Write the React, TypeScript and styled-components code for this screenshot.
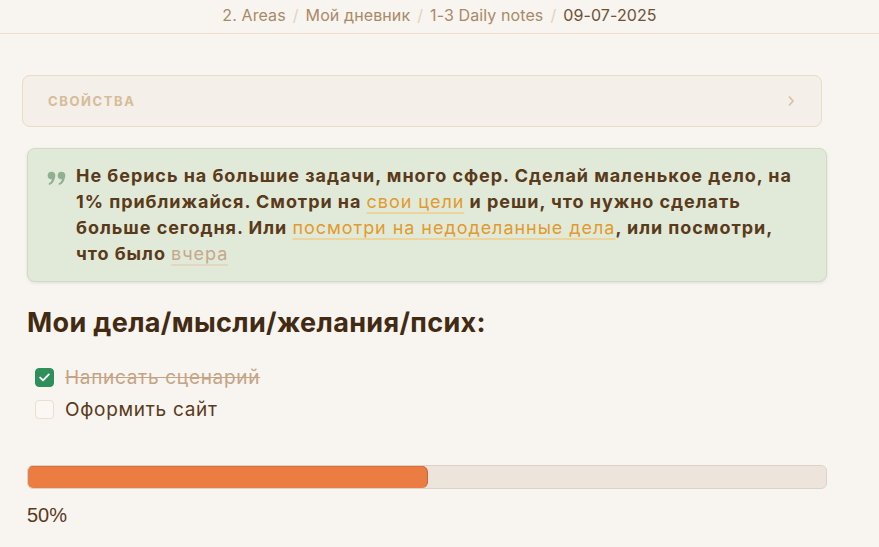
import React from "react";
import styled, { createGlobalStyle } from "styled-components";

const Global = createGlobalStyle`
  html, body { margin: 0; padding: 0; background: #f8f4ef; }
  body { font-family: Inter, "Noto Sans", sans-serif; color: #5a3a1a; }
`;

const Page = styled.div`
  width: 879px;
  min-height: 547px;
  display: flex;
  flex-direction: column;
`;

const Header = styled.div`
  height: 34px;
  border-bottom: 1px solid #efdfc9;
  display: flex;
  align-items: center;
  justify-content: center;
  gap: 7px;
  font-size: 16px;
  letter-spacing: 0.1px;
  box-sizing: border-box;
  padding-bottom: 4px;
`;

const Sep = styled.span`
  color: #e2d2bd;
`;

const Crumb = styled.span<{ $current?: boolean }>`
  color: ${(p) => (p.$current ? "#6e5236" : "#a88a68")};
`;

const Content = styled.div`
  display: flex;
  flex-direction: column;
  padding: 41px 0 0 27px;
  width: 800px;
`;

const Props = styled.div`
  margin-left: -5px;
  width: 800px;
  height: 52px;
  box-sizing: border-box;
  border: 1px solid #eadcc7;
  border-radius: 8px;
  background: #f4efe8;
  display: flex;
  align-items: center;
  justify-content: space-between;
  padding: 0 26px 0 25px;
`;

const PropsLabel = styled.span`
  font-size: 13px;
  font-weight: 700;
  letter-spacing: 1.6px;
  color: #d6bc98;
`;

const Quote = styled.div`
  margin-top: 21px;
  box-sizing: border-box;
  background: #e1ead9;
  border: 1px solid #cfdbc6;
  border-radius: 8px;
  box-shadow: 0 1px 3px rgba(120, 130, 100, 0.18);
  padding: 14px 20px 14px 19px;
  display: flex;
  gap: 9px;
`;

const QuoteIcon = styled.svg`
  flex: none;
  margin-top: 8px;
`;

const QuoteText = styled.div`
  font-size: 18px;
  font-weight: 700;
  line-height: 26px;
  color: #5a3a1a;
  letter-spacing: 0.95px;
`;

const Link = styled.a<{ $muted?: boolean }>`
  font-weight: 400;
  color: ${(p) => (p.$muted ? "#c4a98a" : "#e19a2e")};
  text-decoration: underline;
  text-decoration-color: ${(p) => (p.$muted ? "#e5d6c2" : "#ecd49c")};
  text-decoration-thickness: 2px;
  text-underline-offset: 4px;
`;

const Heading = styled.h2`
  margin: 23px 0 0 0;
  font-size: 27px;
  font-weight: 700;
  line-height: 36px;
  letter-spacing: 0.35px;
  color: #432a12;
`;

const List = styled.div`
  margin-top: 27px;
  padding-left: 8px;
  display: flex;
  flex-direction: column;
  gap: 13px;
`;

const Item = styled.div`
  display: flex;
  align-items: center;
  gap: 11px;
  height: 19px;
`;

const Box = styled.div<{ $checked?: boolean }>`
  width: 19px;
  height: 19px;
  box-sizing: border-box;
  border-radius: 4px;
  background: ${(p) => (p.$checked ? "#2f8f5b" : "#fbf8f4")};
  border: 1px solid ${(p) => (p.$checked ? "#2f8f5b" : "#eadfd0")};
  display: flex;
  align-items: center;
  justify-content: center;
`;

const ItemText = styled.span<{ $done?: boolean }>`
  font-size: 19px;
  letter-spacing: 0.7px;
  color: ${(p) => (p.$done ? "#c4a484" : "#5a3a1a")};
  text-decoration: ${(p) => (p.$done ? "line-through" : "none")};
`;

const Track = styled.div`
  margin-top: 46px;
  height: 24px;
  box-sizing: border-box;
  border: 1px solid #dcd2c7;
  border-radius: 6px;
  background: #ede5dc;
  overflow: hidden;
  display: flex;
`;

const Fill = styled.div`
  height: 100%;
  background: #eb7c42;
  border-right: 1px solid #c9683a;
  border-radius: 0 6px 6px 0;
  box-shadow: inset 0 1px 0 #d9703c;
`;

const Percent = styled.div`
  margin-top: 15px;
  font-family: "Liberation Sans", Arial, sans-serif;
  font-size: 20px;
  line-height: 23px;
  color: #5a3a1a;
`;

export default function App() {
  const pct = 50;
  return (
    <Page>
      <Global />
      <Header>
        <Crumb>2. Areas</Crumb>
        <Sep>/</Sep>
        <Crumb>Мой дневник</Crumb>
        <Sep>/</Sep>
        <Crumb>1-3 Daily notes</Crumb>
        <Sep>/</Sep>
        <Crumb $current>09-07-2025</Crumb>
      </Header>
      <Content>
        <Props>
          <PropsLabel>СВОЙСТВА</PropsLabel>
          <svg width="8" height="12" viewBox="0 0 8 12">
            <path d="M2 1.5 L6 6 L2 10.5" fill="none" stroke="#d9c4a4" strokeWidth="1.8" />
          </svg>
        </Props>
        <Quote>
          <QuoteIcon width="20" height="15" viewBox="0 0 20 15">
            <circle cx="4.5" cy="4.5" r="3.8" fill="#8fb190" />
            <path d="M7.8 5 C8 10 5.5 13 2 14 L1.6 12.6 C4 11.5 5 9.5 5 7 Z" fill="#8fb190" />
            <circle cx="14.5" cy="4.5" r="3.8" fill="#8fb190" />
            <path d="M17.8 5 C18 10 15.5 13 12 14 L11.6 12.6 C14 11.5 15 9.5 15 7 Z" fill="#8fb190" />
          </QuoteIcon>
          <QuoteText>
            Не берись на большие задачи, много сфер. Сделай маленькое дело, на 1% приближайся. Смотри на{" "}
            <Link>свои цели</Link> и реши, что нужно сделать больше сегодня. Или{" "}
            <Link>посмотри на недоделанные дела</Link>, или посмотри, что было <Link $muted>вчера</Link>
          </QuoteText>
        </Quote>
        <Heading>Мои дела/мысли/желания/псих:</Heading>
        <List>
          <Item>
            <Box $checked>
              <svg width="11" height="9" viewBox="0 0 11 9">
                <path d="M1.2 4.6 L4 7.3 L9.8 1.4" fill="none" stroke="#fff" strokeWidth="1.9" strokeLinecap="round" strokeLinejoin="round" />
              </svg>
            </Box>
            <ItemText $done>Написать сценарий</ItemText>
          </Item>
          <Item>
            <Box />
            <ItemText>Оформить сайт</ItemText>
          </Item>
        </List>
        <Track>
          <Fill style={{ width: `${pct}%` }} />
        </Track>
        <Percent>{pct}%</Percent>
      </Content>
    </Page>
  );
}
